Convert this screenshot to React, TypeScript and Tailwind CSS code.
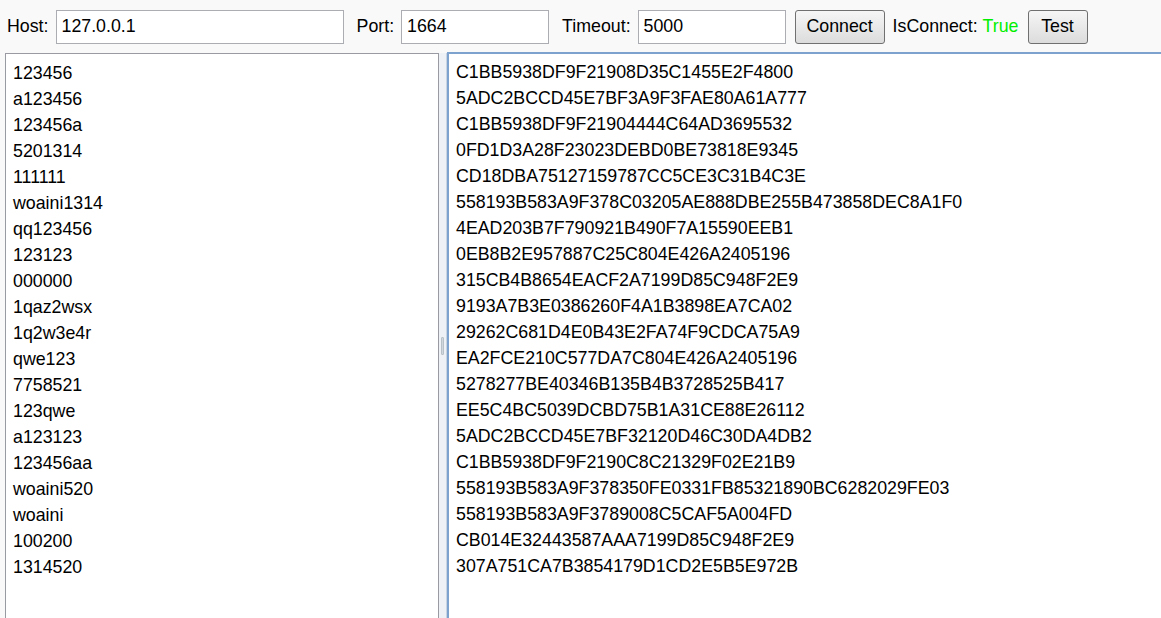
const left = [
  "123456", "a123456", "123456a", "5201314", "111111", "woaini1314", "qq123456",
  "123123", "000000", "1qaz2wsx", "1q2w3e4r", "qwe123", "7758521", "123qwe",
  "a123123", "123456aa", "woaini520", "woaini", "100200", "1314520",
];

const right = [
  "C1BB5938DF9F21908D35C1455E2F4800",
  "5ADC2BCCD45E7BF3A9F3FAE80A61A777",
  "C1BB5938DF9F21904444C64AD3695532",
  "0FD1D3A28F23023DEBD0BE73818E9345",
  "CD18DBA75127159787CC5CE3C31B4C3E",
  "558193B583A9F378C03205AE888DBE255B473858DEC8A1F0",
  "4EAD203B7F790921B490F7A15590EEB1",
  "0EB8B2E957887C25C804E426A2405196",
  "315CB4B8654EACF2A7199D85C948F2E9",
  "9193A7B3E0386260F4A1B3898EA7CA02",
  "29262C681D4E0B43E2FA74F9CDCA75A9",
  "EA2FCE210C577DA7C804E426A2405196",
  "5278277BE40346B135B4B3728525B417",
  "EE5C4BC5039DCBD75B1A31CE88E26112",
  "5ADC2BCCD45E7BF32120D46C30DA4DB2",
  "C1BB5938DF9F2190C8C21329F02E21B9",
  "558193B583A9F378350FE0331FB85321890BC6282029FE03",
  "558193B583A9F3789008C5CAF5A004FD",
  "CB014E32443587AAA7199D85C948F2E9",
  "307A751CA7B3854179D1CD2E5B5E972B",
];

function Field({ value, width }: { value: string; width: string }) {
  return (
    <div className={`${width} h-[34px] bg-white border border-[#abadb3] flex items-center px-[5px]`}>
      {value}
    </div>
  );
}

function Btn({ label, width }: { label: string; width: string }) {
  return (
    <div
      className={`${width} h-[34px] rounded-[3px] border border-[#707070] bg-gradient-to-b from-[#f6f6f6] to-[#dcdcdc] flex items-center justify-center`}
    >
      {label}
    </div>
  );
}

export default function App() {
  return (
    <div
      className="w-[1161px] h-[618px] overflow-hidden bg-[#f9f9f9] flex flex-col text-[17.8px] text-black"
      style={{ fontFamily: '"Liberation Sans", Arial, sans-serif' }}
    >
      {/* toolbar */}
      <div className="h-[52px] shrink-0 flex items-center pl-[7px] pt-[1px]">
        <span>Host:</span>
        <div className="ml-[7px]">
          <Field value="127.0.0.1" width="w-[288px]" />
        </div>
        <span className="ml-[13px]">Port:</span>
        <div className="ml-[7px]">
          <Field value="1664" width="w-[148px]" />
        </div>
        <span className="ml-[13px]">Timeout:</span>
        <div className="ml-[7px]">
          <Field value="5000" width="w-[148px]" />
        </div>
        <div className="ml-[9px]">
          <Btn label="Connect" width="w-[90px]" />
        </div>
        <span className="ml-[8px]">IsConnect:</span>
        <span className="ml-[5px] text-[#00ee00]">True</span>
        <div className="ml-[9px]">
          <Btn label="Test" width="w-[60px]" />
        </div>
      </div>

      {/* content */}
      <div className="flex-1 flex min-h-0">
        <div className="ml-[5px] mt-[1px] w-[434px] bg-white border-l border-t border-r border-[#9a9aa2] pl-[7px] pt-[6px] leading-[26px]">
          {left.map((t, i) => (
            <div key={i}>{t}</div>
          ))}
        </div>

        {/* splitter */}
        <div className="w-[8px] mt-[1px] bg-[#eef1f5] border-r border-[#c8d4e2] flex flex-col justify-center items-center">
          <div className="w-[3px] h-[18px] mt-[20px] bg-[#cfd6de] border border-[#b8c0c8] rounded-[1px]" />
        </div>

        <div className="flex-1 bg-white border-l-2 border-t-2 border-[#7da2ce] pl-[7px] pt-[5px] leading-[26px]">
          {right.map((t, i) => (
            <div key={i}>{t}</div>
          ))}
        </div>
      </div>
    </div>
  );
}
